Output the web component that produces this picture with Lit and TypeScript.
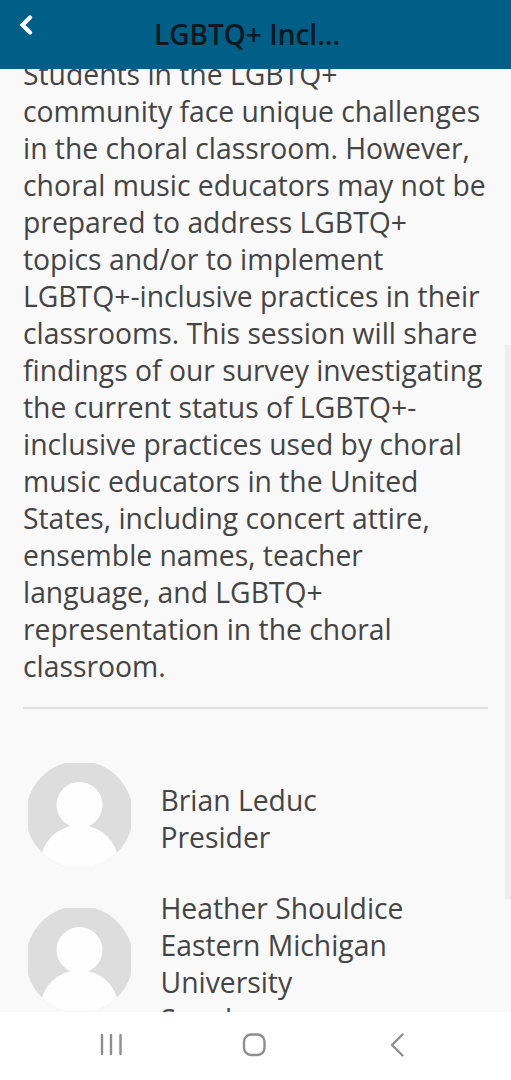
import { LitElement, html, css, svg } from "lit";
import { customElement } from "lit/decorators.js";

const BODY = `Students in the LGBTQ+ community face unique challenges in the choral classroom. However, choral music educators may not be prepared to address LGBTQ+ topics and/or to implement LGBTQ+-inclusive practices in their classrooms. This session will share findings of our survey investigating the current status of LGBTQ+-inclusive practices used by choral music educators in the United States, including concert attire, ensemble names, teacher language, and LGBTQ+ representation in the choral classroom.`;

const avatar = svg`<svg class="avatar" viewBox="0 0 103 103" aria-hidden="true">
  <defs><clipPath id="c"><circle cx="51.5" cy="51.5" r="53.5"/></clipPath></defs>
  <g clip-path="url(#c)">
    <rect width="103" height="103" fill="#dddddd"/>
    <circle cx="51.5" cy="42" r="23" fill="#fefefe"/>
    <ellipse cx="51.5" cy="100" rx="39" ry="38" fill="#fefefe"/>
  </g>
</svg>`;

@customElement("app-root")
export class AppRoot extends LitElement {
  static styles = css`
    :host {
      display: flex;
      flex-direction: column;
      height: 1080px;
      width: 511px;
      overflow: hidden;
      font-family: "Open Sans", sans-serif;
      background: #f9f9f9;
      position: relative;
    }
    .header {
      height: 69px;
      flex: none;
      background: #005f87;
      display: flex;
      position: relative;
      z-index: 1;
    }
    .back {
      width: 14px;
      height: 20px;
      margin: 15px 0 0 19px;
      flex: none;
    }
    .title {
      margin: 16px 0 0 121px;
      font-size: 28px;
      line-height: 37px;
      font-weight: 600;
      color: #0a1820;
    }
    .main {
      flex: 1;
      min-height: 0;
      overflow: hidden;
      position: relative;
      color: #444444;
      font-size: 28.3px;
      line-height: 37px;
    }
    .scroll {
      margin-top: -13px;
      padding: 0 23px;
    }
    .desc { margin: 0; }
    .rule {
      height: 2px;
      background: #e2e2e2;
      margin: 22px 0 0;
      border: 0;
    }
    .people {
      display: flex;
      flex-direction: column;
      gap: 15px;
      margin-top: 54px;
    }
    .person {
      display: flex;
      align-items: center;
      padding-left: 5px;
    }
    .avatar {
      width: 103px;
      height: 103px;
      flex: none;
      margin: 0 30px 9px 0;
    }
    .info { flex: 1; margin-left: -0.5px; }
    .thumb {
      position: absolute;
      right: 0;
      top: 276px;
      width: 6px;
      height: 554px;
      background: #eeeeee;
    }
    .nav {
      height: 68px;
      flex: none;
      background: #ffffff;
      display: block;
    }
    .nav svg { display: block; }
  `;

  render() {
    return html`
      <header class="header">
        <svg class="back" viewBox="0 0 14 20" aria-hidden="true">
          <path d="M11 2.5 L3.5 10 L11 17.5" fill="none" stroke="#fff" stroke-width="4.2" stroke-linecap="round" stroke-linejoin="miter"/>
        </svg>
        <div class="title">LGBTQ+ Incl...</div>
      </header>
      <main class="main">
        <div class="scroll">
          <p class="desc">${BODY}</p>
          <hr class="rule" />
          <div class="people">
            <div class="person">
              ${avatar}
              <div class="info">Brian Leduc<br />Presider</div>
            </div>
            <div class="person">
              ${avatar}
              <div class="info">Heather Shouldice<br />Eastern Michigan University<br />Speaker</div>
            </div>
          </div>
        </div>
        <div class="thumb"></div>
      </main>
      <nav class="nav">
        <svg width="511" height="68" viewBox="0 0 511 68" aria-hidden="true" fill="none" stroke="#8e8e8e" stroke-width="2.4">
          <path d="M102 23 V42 M111 23 V42 M120.5 23 V42" stroke-linecap="round"/>
          <rect x="244" y="22.5" width="20.5" height="20.5" rx="7"/>
          <path d="M402.5 22.5 L392 33 L402.5 43.5" stroke-linecap="round" stroke-linejoin="round"/>
        </svg>
      </nav>
    `;
  }
}
